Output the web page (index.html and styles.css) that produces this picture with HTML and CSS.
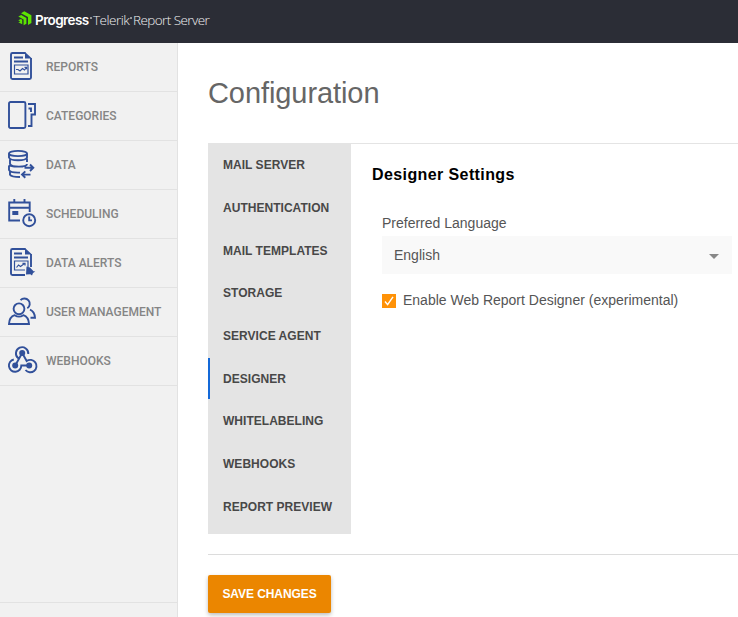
FILE: index.html
```html
<!DOCTYPE html>
<html lang="en">
<head>
<meta charset="utf-8">
<title>Configuration</title>
<link rel="stylesheet" href="styles.css">
</head>
<body>
<header class="topbar">
  <svg class="logo" viewBox="0 0 14 15"><path d="M3 2.2 6.3.3 13.4 4.2V12L10 14V6.1L3 2.2Z"/><path d="M.3 5.5 3.2 4 8.4 7V12.7L5.6 14.2V8.5L.3 5.5Z"/><path d="M.3 9.2 2.8 7.9 4.2 8.8V13.2L.3 11.2 2.4 10.4Z"/></svg>
  <span class="brand">Progress<i class="mark"></i></span>
  <span class="product telerik">Telerik<i class="mark"></i></span>
  <span class="product server">Report Server</span>
</header>
<div class="layout">
  <nav class="sidebar">
    <a class="nav-item"><svg class="icon" viewBox="0 0 28 28"><path d="M17.5 1H4.500Q3 1 3 2.500v23Q3 27 4.500 27h17q1.500 0 1.500-1.500V6M6 5.500h9M6 9.500h14"/><path class="thin" d="M6.500 13h13.500v9H6.500zM8 17.500h2l2 1.500 2.500-2.500 2 1.500 2-2.500M16.500 15.300h2v2"/><path class="solid" d="M17 0 24 6.500H17Z"/></svg><span>REPORTS</span></a>
    <a class="nav-item"><svg class="icon" viewBox="0 0 28 28"><rect x="1" y="1" width="16.400" height="26" rx="1.500"/><path d="M20 3h7v10.500h-3.500V25H20M20.500 7.500h2.500v3.500"/></svg><span>CATEGORIES</span></a>
    <a class="nav-item"><svg class="icon" viewBox="0 0 28 28"><ellipse cx="10" cy="3.500" rx="9" ry="2.600"/><path d="M1 3.500v4Q2 10.300 10 10.300T19 7.500v-4M2 9.500v4.300Q3 16.600 11 16.600T19 14M19 8.500V12M1 15.500V20q1 2.600 9 2.600h2M1 15q2 1.600 8 1.600h6M2 20.500v4.200Q3.500 27 12 27M16.500 17.800H25M22 14.500l3.300 3.300L22 21M22.500 24.600H14M17.300 21.300 14 24.600l3.300 3.200"/></svg><span>DATA</span></a>
    <a class="nav-item"><svg class="icon" viewBox="0 0 28 28"><path d="M12 21.500H1.200V3.500h20.500V13M1.200 8.800h20.500M6.300 0v3M16.500 0v3"/><path class="solid" d="M4.300 12h6v4h-6z"/><circle cx="21.200" cy="21.200" r="6"/><path d="M21.200 17.600v3.800H24"/></svg><span>SCHEDULING</span></a>
    <a class="nav-item"><svg class="icon" viewBox="0 0 28 28"><path d="M17.500 1H4.500Q3 1 3 2.500v23Q3 27 4.500 27H17M23 6v13M6 5.500h8M6 9.500h14"/><path class="thin" d="M20 19v-6H6.500v9H17M8.500 19.500l2-2.500 2 1.500 4-3M14.500 15.300h2.500v2.300"/><path class="solid" d="M17 0 24 6.500H17ZM18.500 18.500l3.500 1 3.500 3.700 1.800.4-2.300 1.500-1 2.500-1.700-1.300-4.300.3Z"/></svg><span>DATA ALERTS</span></a>
    <a class="nav-item"><svg class="icon" viewBox="0 0 28 28"><circle cx="11" cy="11.800" r="5.400"/><path d="M1 27q.3-7 5.700-8.800 4.300 2.800 8.600 0Q20.700 20 21 27ZM12.500 3.200a5.300 5.300 0 1 1 6.800 8M22 12.600q4.600 2 5 8.100h-4.500"/></svg><span>USER MANAGEMENT</span></a>
    <a class="nav-item"><svg class="icon" viewBox="0 0 28 28"><path d="M10.300 12.300A6.200 6.200 0 1 1 20.300 8M14.200 7 7.200 19.500M14.200 7l4.500 8a6.200 6.200 0 1 1-1.200 9M21.200 19.500H13.300a6.200 6.200 0 1 1-7.500-6"/><circle class="solid" cx="14.200" cy="7" r="3"/><circle class="solid" cx="7.200" cy="19.500" r="3"/><circle class="solid" cx="21.200" cy="19.500" r="3"/></svg><span>WEBHOOKS</span></a>
    <div class="sidebar-footer"></div>
  </nav>
  <main class="content">
    <h1>Configuration</h1>
    <section class="config">
      <ul class="tabs">
        <li class="tab">MAIL SERVER</li>
        <li class="tab">AUTHENTICATION</li>
        <li class="tab">MAIL TEMPLATES</li>
        <li class="tab">STORAGE</li>
        <li class="tab">SERVICE AGENT</li>
        <li class="tab active">DESIGNER</li>
        <li class="tab">WHITELABELING</li>
        <li class="tab">WEBHOOKS</li>
        <li class="tab">REPORT PREVIEW</li>
      </ul>
      <div class="panel">
        <h2>Designer Settings</h2>
        <div class="form">
          <div class="label">Preferred Language</div>
          <div class="select"><span>English</span><i class="caret"></i></div>
          <div class="check-row"><svg class="checkbox" viewBox="0 0 14 14"><path d="M3 7.500 5.600 10.600 11 2.800"/></svg><span>Enable Web Report Designer (experimental)</span></div>
        </div>
      </div>
    </section>
    <div class="actions"><button class="save">SAVE CHANGES</button></div>
  </main>
</div>
</body>
</html>
```
FILE: styles.css
```css
* { box-sizing: border-box; }
body {
  margin: 0;
  height: 617px;
  overflow: hidden;
  background: #fff;
  color: #555;
  font-family: "Liberation Sans", Arial, sans-serif;
}
.topbar {
  display: flex;
  align-items: center;
  height: 43px;
  padding: 0 0 3px 18px;
  background: #2b2d36;
  color: #fff;
  line-height: 20px;
  white-space: nowrap;
}
.logo { width: 14px; height: 15px; margin: 0 3px 3px 0; fill: #5ce500; }
.brand { width: 58px; font: 600 13.5px/20px Inter, sans-serif; letter-spacing: -0.58px; }
.product { font: 300 13.5px/20px "Open Sans", sans-serif; color: #f0f0f0; }
.telerik { width: 40px; letter-spacing: -0.5px; }
.server { letter-spacing: -0.57px; }
.mark {
  display: inline-block;
  width: 2px;
  height: 2px;
  margin-left: 1px;
  border-radius: 50%;
  background: #bbb;
  vertical-align: 6px;
}
.layout { display: flex; height: 574px; }
.sidebar {
  display: flex;
  flex: 0 0 178px;
  flex-direction: column;
  background: #f1f1f1;
  border-right: 1px solid #e2e2e2;
}
.nav-item {
  display: flex;
  align-items: center;
  gap: 10px;
  height: 49px;
  padding-left: 8px;
  border-bottom: 1px solid #e2e2e2;
  color: #858585;
  font: 500 12px/16px Roboto, sans-serif;
  white-space: nowrap;
}
.icon { width: 28px; height: 28px; margin-top: -2px; fill: none; stroke: #31509a; stroke-width: 1.9; overflow: visible; }
.thin { stroke-width: 1.2; }
.solid { fill: #31509a; stroke: none; }
.sidebar-footer { height: 15px; margin-top: auto; border-top: 1px solid #e2e2e2; }
.content { flex: 1; min-width: 0; padding: 33px 0 0 30px; }
h1 { margin: 0; height: 67px; font-size: 29px; font-weight: 400; line-height: 34px; letter-spacing: -0.08px; color: #666; }
.config { display: flex; height: 391px; }
.tabs { flex: 0 0 143px; margin: 0; padding: 1px 0 0; list-style: none; background: #e4e4e4; }
.tab {
  display: flex;
  align-items: center;
  height: 42.7px;
  padding-left: 15px;
  color: #484848;
  font-size: 12px;
  font-weight: 700;
  letter-spacing: 0.03px;
  white-space: nowrap;
}
.active { height: 41px; margin: .7px 0 1px; padding-left: 13px; border-left: 2px solid #1469d8; }
.panel { flex: 1; padding: 21px 6px 0 21px; border-top: 1px solid #e4e4e4; }
h2 { margin: 0; height: 49px; color: #000; font-size: 16px; line-height: 20px; letter-spacing: 0.4px; }
.form { padding-left: 10px; font-size: 14px; }
.label { height: 22px; line-height: 18px; }
.select {
  display: flex;
  align-items: center;
  justify-content: space-between;
  height: 38px;
  padding: 0 13px 0 12px;
  background: #f9f9f9;
}
.caret { border: 5px solid transparent; border-top-color: #888; border-bottom: 0; margin-top: 3px; }
.check-row { display: flex; align-items: center; gap: 7px; margin-top: 16px; height: 20px; white-space: nowrap; }
.checkbox { width: 14px; height: 14px; margin-top: 1px; background: #ff9207; fill: none; stroke: #fff; stroke-width: 1.4; }
.actions { margin-top: 20px; padding-top: 20px; border-top: 1px solid #dcdcdc; }
.save {
  display: block;
  width: 123px;
  height: 38px;
  padding: 0;
  border: 0;
  border-radius: 2px;
  background: #eb8600;
  box-shadow: 0 2px 4px #0004;
  color: #fff;
  font: 700 12px/16px "Liberation Sans", sans-serif;
  letter-spacing: -0.08px;
}
```
